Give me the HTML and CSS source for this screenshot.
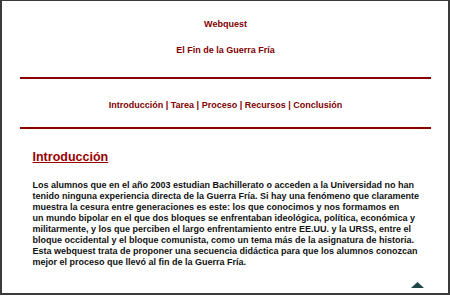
FILE: index.html
```html
<!DOCTYPE html>
<html lang="es">
<head>
<meta charset="utf-8">
<title>Webquest - El Fin de la Guerra Fría</title>
<link rel="stylesheet" href="styles.css">
</head>
<body>
<div class="frame">
  <header class="masthead">
    <p class="site">Webquest</p>
    <p class="title">El Fin de la Guerra Fría</p>
  </header>
  <hr class="rule rule-top">
  <nav class="nav">
    <a href="#">Introducción</a> | <a href="#">Tarea</a> | <a href="#">Proceso</a> | <a href="#">Recursos</a> | <a href="#">Conclusión</a>
  </nav>
  <hr class="rule rule-bottom">
  <main class="content">
    <h2 class="heading">Introducción</h2>
    <p class="text">Los alumnos que en el año 2003 estudian Bachillerato o acceden a la Universidad no han<br>tenido ninguna experiencia directa de la Guerra Fría. Si hay una fenómeno que claramente<br>muestra la cesura entre generaciones es este: los que conocimos y nos formamos en<br>un mundo bipolar en el que dos bloques se enfrentaban ideológica, política, económica y<br>militarmente, y los que perciben el largo enfrentamiento entre EE.UU. y la URSS, entre el<br>bloque occidental y el bloque comunista, como un tema más de la asignatura de historia.<br>Esta webquest trata de proponer una secuencia didáctica para que los alumnos conozcan<br>mejor el proceso que llevó al fin de la Guerra Fría.</p>
    <div class="totop">
      <a href="#" class="totop-link" aria-label="Arriba"><svg width="13" height="6" viewBox="0 0 13 6"><polygon points="6.5,0 13,6 0,6" fill="#1f4646"/></svg></a>
    </div>
  </main>
</div>
</body>
</html>
```
FILE: styles.css
```css
html, body {
  margin: 0;
  padding: 0;
  background: #ffffff;
}
.frame {
  width: 450px;
  height: 295px;
  box-sizing: border-box;
  border-style: solid;
  border-color: #3a3a3a;
  border-width: 1px 2px 2px 2px;
  padding: 0 17px 0 18px;
  font-family: "Liberation Sans", Arial, sans-serif;
  overflow: hidden;
}
.masthead {
  text-align: center;
  color: #800000;
  font-weight: bold;
  font-size: 9px;
  line-height: 11px;
}
.site {
  margin: 17.5px 0 0 0;
}
.title {
  margin: 15px 0 0 0;
}
.rule {
  border: 0;
  height: 2px;
  background: #8b0000;
  margin: 0;
}
.rule-top {
  margin-top: 21px;
}
.nav {
  margin-top: 21px;
  text-align: center;
  font-size: 9px;
  line-height: 11px;
  font-weight: bold;
  color: #800000;
}
.nav a {
  color: #800000;
  text-decoration: none;
}
.rule-bottom {
  margin-top: 16px;
}
.content {
  padding-left: 12.5px;
}
.heading {
  margin: 21px 0 0 0;
  font-size: 12.5px;
  line-height: 15px;
  font-weight: bold;
  color: #990000;
  text-decoration: underline;
  text-underline-offset: 1px;
}
.text {
  margin: 15px 0 0 0;
  font-size: 9px;
  line-height: 11.1px;
  font-weight: bold;
  color: #111111;
  white-space: nowrap;
}
.totop {
  display: flex;
  justify-content: flex-end;
  padding-right: 7.5px;
  margin-top: 14px;
}
.totop-link {
  display: block;
  line-height: 0;
}
```
